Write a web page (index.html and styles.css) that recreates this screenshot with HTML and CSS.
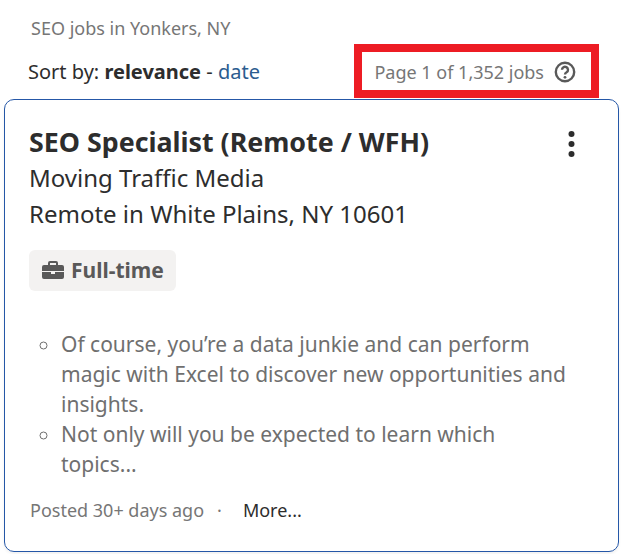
FILE: index.html
```html
<!DOCTYPE html>
<html lang="en">
<head>
<meta charset="utf-8">
<title>SEO jobs</title>
<link rel="stylesheet" href="styles.css">
</head>
<body>
<p class="crumb">SEO jobs in Yonkers, NY</p>
<div class="sortbar">
  <div class="sort">Sort by: <b>relevance</b> - <a href="#">date</a></div>
  <div class="count">
    <span>Page 1 of 1,352 jobs</span>
    <svg class="help" width="22" height="22" viewBox="0 0 22 22" fill="none"><circle cx="11" cy="11" r="9.200" stroke="#595959" stroke-width="2.400"/><path d="M8 8.800a3 3 0 1 1 4.600 2.500c-1 .6-1.600 1.100-1.600 2.200" stroke="#595959" stroke-width="2.400" fill="none"/><circle cx="11" cy="16.300" r="1.400" fill="#595959"/></svg>
  </div>
</div>
<article class="card">
  <div class="head">
    <h2>SEO Specialist (Remote / WFH)</h2>
    <svg class="kebab" width="7" height="28" viewBox="0 0 7 28"><circle cx="3.500" cy="4" r="3" fill="#2d2d2d"/><circle cx="3.500" cy="14" r="3" fill="#2d2d2d"/><circle cx="3.500" cy="24" r="3" fill="#2d2d2d"/></svg>
  </div>
  <div class="line">Moving Traffic Media</div>
  <div class="line">Remote in White Plains, NY 10601</div>
  <div class="tag">
    <svg width="22" height="18" viewBox="0 0 22 18"><path fill="#595959" d="M8 0h6a2 2 0 0 1 2 2v2h4a2 2 0 0 1 2 2v4H0V6a2 2 0 0 1 2-2h4V2a2 2 0 0 1 2-2zm0 2v2h6V2H8zM0 11h9v2h4v-2h9v5a2 2 0 0 1-2 2H2a2 2 0 0 1-2-2v-5z"/></svg>
    <span>Full-time</span>
  </div>
  <ul class="snippet">
    <li>Of course, you’re a data junkie and can perform magic with Excel to discover new opportunities and insights.</li>
    <li>Not only will you be expected to learn which topics...</li>
  </ul>
  <div class="foot"><span class="date">Posted 30+ days ago</span><span class="dot">·</span><span class="more">More...</span></div>
</article>
</body>
</html>
```
FILE: styles.css
```css
* { box-sizing: border-box; }
html, body { margin: 0; padding: 0; }
body { width: 623px; height: 554px; overflow: hidden; background: #fff; font-family: "Noto Sans", sans-serif; color: #2d2d2d; }
.crumb { margin: 0; padding: 15px 0 0 31px; height: 44px; font-size: 18px; line-height: 26px; color: #767676; }
.sortbar { display: flex; justify-content: space-between; align-items: center; height: 54px; padding: 0 24px 0 28px; }
.sort { font-size: 20px; line-height: 28px; padding-top: 2px; }
.sort a { color: #2b5c8f; text-decoration: none; }
.count { display: flex; align-items: center; gap: 10px; height: 54px; padding: 1px 15px 0 12px; border: 8px solid #ed1c24; font-size: 18px; color: #767676; }
.help { display: block; }
.card { margin: 1px 4px 0; height: 453px; border: 1px solid #2557a7; border-radius: 10px; padding: 24px 24px 0; box-shadow: 0 2px 3px rgba(0,0,0,.06); }
.head { display: flex; justify-content: space-between; align-items: center; padding-right: 19px; }
.kebab { margin-top: 4px; }
h2 { margin: 0; font-size: 26.800px; line-height: 36px; font-weight: 700; }
.line { font-size: 24px; line-height: 36px; }
.tag { display: flex; width: fit-content; align-items: center; gap: 7px; margin-top: 18px; height: 41px; padding: 0 12px 1px 13px; background: #f3f2f1; border-radius: 6px; color: #595959; font-size: 21px; font-weight: 700; }
.snippet { margin: 38px 0 0; padding: 0 22px 0 32px; list-style: circle; font-size: 21px; line-height: 30px; color: #6f6f6f; }
.foot { display: flex; align-items: center; margin-top: 18px; padding-left: 1px; font-size: 18px; line-height: 26px; }
.date { color: #767676; }
.dot { margin: 0 21px 0 13px; color: #767676; }
.more { color: #2d2d2d; }
```
